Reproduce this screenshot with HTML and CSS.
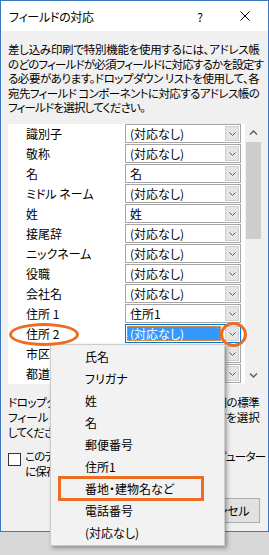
FILE: index.html
```html
<!DOCTYPE html>
<html lang="ja">
<head>
  <meta charset="UTF-8" />
  <title>フィールドの対応</title>
  <link rel="stylesheet" href="styles.css">
</head>
<body>
  <div class="screen">
    <div class="dialog">
      <div class="titlebar">
        <span class="title">フィールドの対応</span>
        <span class="help">?</span>
        <span class="close">
          <svg width="10" height="10" viewBox="0 0 10 10"><path d="M0.5 0.5L9.5 9.5M9.5 0.5L0.5 9.5" stroke="#000" stroke-width="1" fill="none"/></svg>
        </span>
      </div>

      <div class="content">
        <p class="desc">
          <span class="line justify">差し込み印刷で特別機能を使用するには、アドレス帳</span>
          <span class="line justify">のどのフィールドが必須フィールドに対応するかを設定す</span>
          <span class="line justify">る必要があります。ドロップダウン リストを使用して、各</span>
          <span class="line justify">宛先フィールド コンポーネントに対応するアドレス帳の</span>
          <span class="line">フィールドを選択してください。</span>
        </p>

        <div class="mapping">
          <div class="rows">
            <div class="row"><span class="label">識別子</span><div class="combo"><span class="value">(対応なし)</span><span class="arrow"><svg width="7" height="4"><path d="M0.5 0.5L3.5 3.5L6.5 0.5" fill="none" stroke="#606060"/></svg></span></div></div>
            <div class="row"><span class="label">敬称</span><div class="combo"><span class="value">(対応なし)</span><span class="arrow"><svg width="7" height="4"><path d="M0.5 0.5L3.5 3.5L6.5 0.5" fill="none" stroke="#606060"/></svg></span></div></div>
            <div class="row"><span class="label">名</span><div class="combo"><span class="value">名</span><span class="arrow"><svg width="7" height="4"><path d="M0.5 0.5L3.5 3.5L6.5 0.5" fill="none" stroke="#606060"/></svg></span></div></div>
            <div class="row"><span class="label">ミドル ネーム</span><div class="combo"><span class="value">(対応なし)</span><span class="arrow"><svg width="7" height="4"><path d="M0.5 0.5L3.5 3.5L6.5 0.5" fill="none" stroke="#606060"/></svg></span></div></div>
            <div class="row"><span class="label">姓</span><div class="combo"><span class="value">姓</span><span class="arrow"><svg width="7" height="4"><path d="M0.5 0.5L3.5 3.5L6.5 0.5" fill="none" stroke="#606060"/></svg></span></div></div>
            <div class="row"><span class="label">接尾辞</span><div class="combo"><span class="value">(対応なし)</span><span class="arrow"><svg width="7" height="4"><path d="M0.5 0.5L3.5 3.5L6.5 0.5" fill="none" stroke="#606060"/></svg></span></div></div>
            <div class="row"><span class="label">ニックネーム</span><div class="combo"><span class="value">(対応なし)</span><span class="arrow"><svg width="7" height="4"><path d="M0.5 0.5L3.5 3.5L6.5 0.5" fill="none" stroke="#606060"/></svg></span></div></div>
            <div class="row"><span class="label">役職</span><div class="combo"><span class="value">(対応なし)</span><span class="arrow"><svg width="7" height="4"><path d="M0.5 0.5L3.5 3.5L6.5 0.5" fill="none" stroke="#606060"/></svg></span></div></div>
            <div class="row"><span class="label">会社名</span><div class="combo"><span class="value">(対応なし)</span><span class="arrow"><svg width="7" height="4"><path d="M0.5 0.5L3.5 3.5L6.5 0.5" fill="none" stroke="#606060"/></svg></span></div></div>
            <div class="row"><span class="label">住所 1</span><div class="combo"><span class="value">住所1</span><span class="arrow"><svg width="7" height="4"><path d="M0.5 0.5L3.5 3.5L6.5 0.5" fill="none" stroke="#606060"/></svg></span></div></div>
            <div class="row"><span class="label">住所 2</span><div class="combo is-focus"><span class="value">(対応なし)</span><span class="arrow"><svg width="7" height="4"><path d="M0.5 0.5L3.5 3.5L6.5 0.5" fill="none" stroke="#606060"/></svg></span></div></div>
            <div class="row"><span class="label">市区町村</span><div class="combo"><span class="value">(対応なし)</span><span class="arrow"><svg width="7" height="4"><path d="M0.5 0.5L3.5 3.5L6.5 0.5" fill="none" stroke="#606060"/></svg></span></div></div>
            <div class="row"><span class="label">都道府県</span><div class="combo"><span class="value">(対応なし)</span><span class="arrow"><svg width="7" height="4"><path d="M0.5 0.5L3.5 3.5L6.5 0.5" fill="none" stroke="#606060"/></svg></span></div></div>
          </div>
          <div class="scrollbar">
            <div class="scroll-btn"><svg width="9" height="5"><path d="M1 4.5L4.5 1L8 4.5" fill="none" stroke="#606060" stroke-width="1.5"/></svg></div>
            <div class="thumb"></div>
            <div class="track"></div>
            <div class="scroll-btn"><svg width="9" height="5"><path d="M1 0.5L4.5 4L8 0.5" fill="none" stroke="#606060" stroke-width="1.5"/></svg></div>
          </div>
        </div>

        <p class="note">
          <span class="line justify">ドロップダウン リストを使用して、差し込み印刷の標準</span>
          <span class="line justify">フィールドに対応するアドレス帳のフィールドを選択</span>
          <span class="line">してください。</span>
        </p>

        <label class="remember">
          <span class="checkbox"></span>
          <span class="remember-text">
            <span class="line justify">このデータ ソースの組み合わせをこのコンピューター</span>
            <span class="line">に保存する</span>
          </span>
        </label>

        <div class="footer">
          <button class="btn btn-default">OK</button>
          <button class="btn">キャンセル</button>
        </div>
      </div>
    </div>

    <!-- open dropdown of 住所 2 -->
    <ul class="dropdown">
      <li>氏名</li>
      <li>フリガナ</li>
      <li>姓</li>
      <li>名</li>
      <li>郵便番号</li>
      <li>住所1</li>
      <li>番地・建物名など</li>
      <li>電話番号</li>
      <li>(対応なし)</li>
    </ul>

    <!-- orange callouts -->
    <span class="mark mark-label"></span>
    <span class="mark mark-arrow"></span>
    <span class="mark mark-item"></span>
  </div>
</body>
</html>
```

FILE: styles.css
```css
* {
  box-sizing: border-box;
}

body {
  margin: 0;
  background-color: #d7d7d7;
  font-family: "Noto Sans CJK JP", sans-serif;
  font-size: 12px;
  color: #000;
  font-feature-settings: "palt";
}

.screen {
  position: relative;
  width: 269px;
  height: 555px;
  overflow: hidden;
}

.dialog {
  width: 269px;
  height: 532px;
  border: 1px solid #3a78c2;
  background-color: #f0f0f0;
}

.titlebar {
  height: 30px;
  background-color: #fff;
  display: flex;
  align-items: center;
  padding-left: 8px;
}

.title {
  flex: 1;
  letter-spacing: -0.3px;
}

.help {
  width: 44px;
  text-align: center;
}

.close {
  width: 46px;
  display: flex;
  justify-content: center;
}

.content {
  padding: 11px 0 0 7px;
}

.desc,
.note,
.remember-text {
  font-size: 11.5px;
  letter-spacing: -0.8px;
}

.desc {
  margin: 0;
  width: 251px;
  line-height: 14.5px;
}

.line {
  display: block;
  white-space: nowrap;
}

.justify {
  text-align: justify;
  text-align-last: justify;
}

/* field mapping list */
.mapping {
  display: flex;
  margin-top: 9px;
  height: 260px;
}

.rows {
  width: 237px;
  background-color: #fff;
}

.row {
  height: 20px;
  display: flex;
  align-items: center;
}

.label {
  width: 117px;
  padding-left: 18px;
  white-space: nowrap;
}

.combo {
  width: 116px;
  height: 19px;
  border: 1px solid #a6a6a6;
  background-color: #fff;
  display: flex;
  align-items: center;
  padding: 1px;
}

.value {
  flex: 1;
  height: 15px;
  line-height: 15px;
  padding-left: 3px;
  margin-right: 4px;
  white-space: nowrap;
}

.arrow {
  width: 14px;
  height: 15px;
  background-color: #e5e5e5;
  border: 1px solid #cfcfcf;
  display: flex;
  align-items: center;
  justify-content: center;
}

.combo.is-focus {
  border-color: #0078d7;
}

.combo.is-focus .value {
  background-color: #3399ff;
  color: #fff;
  outline: 1px dotted #f0a050;
  outline-offset: -1px;
}

.scrollbar {
  width: 17px;
  display: flex;
  flex-direction: column;
  background-color: #f0f0f0;
}

.scroll-btn {
  height: 17px;
  display: flex;
  align-items: center;
  justify-content: center;
}

.thumb {
  height: 97px;
  margin: 1px 1px 0;
  background-color: #cdcdcd;
}

.track {
  flex: 1;
}

.note {
  margin: 11px 0 0;
  width: 251px;
  line-height: 15px;
}

.remember {
  display: flex;
  margin-top: 9px;
  line-height: 15px;
}

.checkbox {
  width: 13px;
  height: 13px;
  margin-top: 4px;
  border: 1px solid #333;
  background-color: #fff;
  flex-shrink: 0;
}

.remember-text {
  margin-left: 4px;
  width: 234px;
}

.footer {
  display: flex;
  justify-content: flex-end;
  gap: 7px;
  margin-top: 19px;
  padding-right: 8px;
}

.btn {
  width: 75px;
  height: 25px;
  padding: 0;
  border: 1px solid #adadad;
  background-color: #e1e1e1;
  font: inherit;
  color: #000;
}

.btn-default {
  border-color: #0078d7;
}

/* dropdown popup */
.dropdown {
  position: absolute;
  left: 50px;
  top: 344px;
  width: 175px;
  height: 202px;
  margin: 0;
  padding: 1px 0;
  list-style: none;
  background-color: #f2f2f2;
  border: 1px solid #cccccc;
  box-shadow: 2px 2px 4px rgba(0,0,0,0.35);
}

.dropdown li {
  height: 22px;
  line-height: 22px;
  padding-left: 34px;
  white-space: nowrap;
}

/* annotations */
.mark {
  position: absolute;
  border: 3px solid #ee6c21;
}

.mark-label {
  left: 9px;
  top: 323px;
  width: 70px;
  height: 23px;
  border-radius: 50%;
}

.mark-arrow {
  left: 220px;
  top: 322px;
  width: 27px;
  height: 25px;
  border-radius: 50%;
}

.mark-item {
  left: 58px;
  top: 476px;
  width: 146px;
  height: 25px;
}
```
